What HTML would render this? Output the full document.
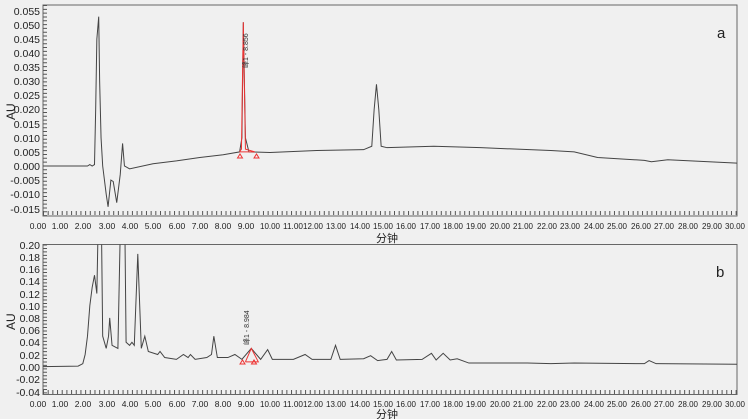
<!DOCTYPE html>
<html><head><meta charset="utf-8"><style>
html,body{margin:0;padding:0;background:#f0f0f0;}
svg{display:block;font-family:"Liberation Sans","Noto Sans CJK SC",sans-serif;}
.l{font-size:10px;fill:#222;}
.xl{font-size:8.5px;fill:#222;text-anchor:middle;}
.yl{font-size:10.5px;fill:#222;text-anchor:end;}
</style></head><body>
<svg width="748" height="419" viewBox="0 0 748 419">
<rect width="748" height="419" fill="#f0f0f0"/>
<defs>
<clipPath id="ca"><rect x="43" y="5" width="694" height="211"/></clipPath>
<clipPath id="cb"><rect x="43" y="244.5" width="694" height="150"/></clipPath>
</defs>
<rect x="43" y="5" width="694" height="211" fill="none" stroke="#666" stroke-width="1"/>
<rect x="43" y="244.5" width="694" height="150" fill="none" stroke="#666" stroke-width="1"/>
<line x1="43" y1="213" x2="737" y2="213" stroke="#555" stroke-width="4" stroke-dasharray="1 3.68"/>
<line x1="43" y1="392" x2="737" y2="392" stroke="#555" stroke-width="4" stroke-dasharray="1 3.68"/>
<line x1="45" y1="5" x2="45" y2="216" stroke="#555" stroke-width="4" stroke-dasharray="1 2.82"/>
<line x1="45" y1="244.5" x2="45" y2="394" stroke="#555" stroke-width="4" stroke-dasharray="1 2.44"/>
<text class="l" x="717" y="38" style="font-size:15px">a</text>
<text class="l" x="716" y="277" style="font-size:15px">b</text>
<text class="l" transform="translate(15,120) rotate(-90)" style="font-size:12px">AU</text>
<text class="l" transform="translate(15,330) rotate(-90)" style="font-size:12px">AU</text>
<text class="l" x="376" y="242" style="font-size:11px">分钟</text>
<text class="l" x="376" y="418" style="font-size:11px">分钟</text>
<g>
<text class="yl" x="40" y="15">0.055</text><text class="yl" x="40" y="29">0.050</text>
<text class="yl" x="40" y="43">0.045</text><text class="yl" x="40" y="57">0.040</text>
<text class="yl" x="40" y="71">0.035</text><text class="yl" x="40" y="85">0.030</text>
<text class="yl" x="40" y="99">0.025</text><text class="yl" x="40" y="113">0.020</text>
<text class="yl" x="40" y="128">0.015</text><text class="yl" x="40" y="142">0.010</text>
<text class="yl" x="40" y="156">0.005</text><text class="yl" x="40" y="170">0.000</text>
<text class="yl" x="40" y="184">-0.005</text><text class="yl" x="40" y="198">-0.010</text>
<text class="yl" x="40" y="213">-0.015</text>
</g>
<g>
<text class="yl" x="40" y="249">0.20</text><text class="yl" x="40" y="261">0.18</text>
<text class="yl" x="40" y="273">0.16</text><text class="yl" x="40" y="285">0.14</text>
<text class="yl" x="40" y="298">0.12</text><text class="yl" x="40" y="310">0.10</text>
<text class="yl" x="40" y="322">0.08</text><text class="yl" x="40" y="334">0.06</text>
<text class="yl" x="40" y="346">0.04</text><text class="yl" x="40" y="359">0.02</text>
<text class="yl" x="40" y="371">0.00</text><text class="yl" x="40" y="383">-0.02</text>
<text class="yl" x="40" y="396">-0.04</text>
</g>
<g id="xa">
<text class="xl" x="38" y="229">0.00</text><text class="xl" x="60" y="229">1.00</text><text class="xl" x="83" y="229">2.00</text><text class="xl" x="107" y="229">3.00</text><text class="xl" x="130" y="229">4.00</text><text class="xl" x="153" y="229">5.00</text><text class="xl" x="177" y="229">6.00</text><text class="xl" x="200" y="229">7.00</text><text class="xl" x="223" y="229">8.00</text><text class="xl" x="246" y="229">9.00</text>
<g lengthAdjust="spacingAndGlyphs">
<text class="xl" x="270" y="229" textLength="20" lengthAdjust="spacingAndGlyphs">10.00</text><text class="xl" x="293" y="229" textLength="20" lengthAdjust="spacingAndGlyphs">11.00</text><text class="xl" x="313" y="229" textLength="20" lengthAdjust="spacingAndGlyphs">12.00</text><text class="xl" x="336" y="229" textLength="20" lengthAdjust="spacingAndGlyphs">13.00</text><text class="xl" x="360" y="229" textLength="20" lengthAdjust="spacingAndGlyphs">14.00</text><text class="xl" x="383" y="229" textLength="20" lengthAdjust="spacingAndGlyphs">15.00</text><text class="xl" x="406" y="229" textLength="20" lengthAdjust="spacingAndGlyphs">16.00</text><text class="xl" x="430" y="229" textLength="20" lengthAdjust="spacingAndGlyphs">17.00</text><text class="xl" x="453" y="229" textLength="20" lengthAdjust="spacingAndGlyphs">18.00</text><text class="xl" x="476" y="229" textLength="20" lengthAdjust="spacingAndGlyphs">19.00</text><text class="xl" x="500" y="229" textLength="20" lengthAdjust="spacingAndGlyphs">20.00</text><text class="xl" x="523" y="229" textLength="20" lengthAdjust="spacingAndGlyphs">21.00</text><text class="xl" x="547" y="229" textLength="20" lengthAdjust="spacingAndGlyphs">22.00</text><text class="xl" x="570" y="229" textLength="20" lengthAdjust="spacingAndGlyphs">23.00</text><text class="xl" x="594" y="229" textLength="20" lengthAdjust="spacingAndGlyphs">24.00</text><text class="xl" x="617" y="229" textLength="20" lengthAdjust="spacingAndGlyphs">25.00</text><text class="xl" x="641" y="229" textLength="20" lengthAdjust="spacingAndGlyphs">26.00</text><text class="xl" x="664" y="229" textLength="20" lengthAdjust="spacingAndGlyphs">27.00</text><text class="xl" x="688" y="229" textLength="20" lengthAdjust="spacingAndGlyphs">28.00</text><text class="xl" x="712" y="229" textLength="20" lengthAdjust="spacingAndGlyphs">29.00</text><text class="xl" x="735" y="229" textLength="20" lengthAdjust="spacingAndGlyphs">30.00</text>
</g>
</g>
<use href="#xa" y="178"/>
<g clip-path="url(#ca)">
<g transform="translate(36,166) scale(23.4,-2818)">
<polyline fill="none" stroke="#444" stroke-width="1" vector-effect="non-scaling-stroke" points="0,0 2.2,0 2.3,0.0005 2.4,0 2.5,0.0005 2.55,0.02 2.6,0.045 2.65,0.05 2.68,0.053 2.72,0.03 2.78,0.01 2.85,0 3.0,-0.01 3.08,-0.0145 3.2,-0.005 3.3,-0.0055 3.45,-0.013 3.6,-0.003 3.7,0.008 3.78,0 4.0,-0.001 5,0.0008 6,0.0018 7,0.003 8,0.004 8.7,0.005 8.8,0.01 8.86,0.051 8.95,0.01 9.1,0.005 10,0.0048 12,0.0055 14,0.0058 14.35,0.007 14.45,0.02 14.55,0.029 14.65,0.02 14.75,0.007 15,0.0065 17,0.007 19,0.0065 22,0.0055 23,0.005 24,0.003 26,0.002 26.3,0.0015 27,0.0022 30,0.001"/>
<polyline fill="none" stroke="#e33" stroke-width="1" vector-effect="non-scaling-stroke" points="8.7,0.005 8.78,0.006 8.86,0.051 8.95,0.006 9.35,0.005 8.7,0.005"/>
</g>
</g>
<path d="M237.5,158 l2.5,-4 2.5,4z M254,158 l2.5,-4 2.5,4z" fill="none" stroke="#e33"/>
<text transform="translate(248,68) rotate(-90)" style="font-size:7px;fill:#333">峰1 - 8.856</text>
<g clip-path="url(#cb)">
<g transform="translate(36,366.7) scale(23.4,-610)">
<polyline fill="none" stroke="#444" stroke-width="1" vector-effect="non-scaling-stroke" points="0,0 1.8,0.001 2.0,0.005 2.1,0.02 2.2,0.05 2.3,0.1 2.4,0.13 2.5,0.15 2.6,0.12 2.65,0.22 2.8,0.22 2.85,0.05 3.0,0.03 3.1,0.05 3.15,0.08 3.25,0.035 3.5,0.03 3.6,0.22 3.8,0.22 3.85,0.04 4.0,0.035 4.1,0.04 4.2,0.035 4.35,0.185 4.5,0.03 4.65,0.05 4.8,0.025 5.2,0.02 5.3,0.025 5.5,0.015 6,0.012 6.3,0.02 6.5,0.015 6.6,0.02 6.8,0.012 7.3,0.015 7.5,0.02 7.6,0.05 7.75,0.015 8.2,0.015 8.5,0.02 8.8,0.012 9.2,0.03 9.6,0.012 9.9,0.028 10.1,0.012 11,0.012 11.5,0.02 11.8,0.012 12.6,0.012 12.8,0.035 13,0.012 14,0.013 14.3,0.018 14.6,0.01 15.0,0.012 15.2,0.025 15.4,0.011 16.5,0.012 16.9,0.022 17.1,0.011 17.4,0.022 17.7,0.011 18,0.013 18.5,0.006 21,0.006 22,0.005 23,0.006 26,0.005 26.2,0.01 26.5,0.005 30,0.004"/>
<polyline fill="none" stroke="#e33" stroke-width="1" vector-effect="non-scaling-stroke" points="8.95,0.008 9.2,0.03 9.5,0.008 8.95,0.008"/>
</g>
</g>
<path d="M240,364 l2.5,-4 2.5,4z M251.5,364 l2.5,-4 2.5,4z" fill="none" stroke="#e33"/>
<text transform="translate(249,345) rotate(-90)" style="font-size:7px;fill:#333">峰1 - 8.984</text>
</svg>
</body></html>
